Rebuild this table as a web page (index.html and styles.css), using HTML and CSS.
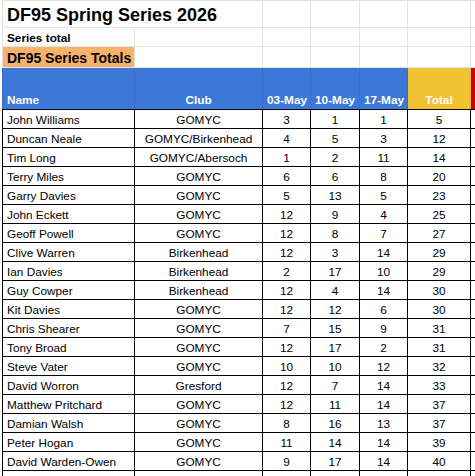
FILE: index.html
```html
<!DOCTYPE html>
<html lang="en">
<head>
    <meta charset="UTF-8">
    <meta name="viewport" content="width=device-width, initial-scale=1.0">
    <title>DF95 Spring Series 2026</title>
    <link rel="stylesheet" href="styles.css">
</head>
<body>
    <table class="sheet">
        <colgroup>
            <col class="col-name">
            <col class="col-club">
            <col class="col-race">
            <col class="col-race wide">
            <col class="col-race">
            <col class="col-total">
            <col class="col-extra">
        </colgroup>
        <tr class="title-row">
            <td colspan="2" class="title">DF95 Spring Series 2026</td>
            <td></td><td></td><td></td><td></td><td class="extra"></td>
        </tr>
        <tr class="sub-row">
            <td class="subtitle">Series total</td>
            <td></td><td></td><td></td><td></td><td></td><td class="extra"></td>
        </tr>
        <tr class="band-row">
            <td class="band">DF95 Series Totals</td>
            <td></td><td></td><td></td><td></td><td></td><td class="extra"></td>
        </tr>
        <tr class="head-row">
            <th class="name">Name</th>
            <th>Club</th>
            <th>03-May</th>
            <th>10-May</th>
            <th>17-May</th>
            <th class="total">Total</th>
            <th class="extra flag"></th>
        </tr>
        <tbody id="results"></tbody>
    </table>

    <script>
        const results = [
            ['John Williams', 'GOMYC', 3, 1, 1, 5],
            ['Duncan Neale', 'GOMYC/Birkenhead', 4, 5, 3, 12],
            ['Tim Long', 'GOMYC/Abersoch', 1, 2, 11, 14],
            ['Terry Miles', 'GOMYC', 6, 6, 8, 20],
            ['Garry Davies', 'GOMYC', 5, 13, 5, 23],
            ['John Eckett', 'GOMYC', 12, 9, 4, 25],
            ['Geoff Powell', 'GOMYC', 12, 8, 7, 27],
            ['Clive Warren', 'Birkenhead', 12, 3, 14, 29],
            ['Ian Davies', 'Birkenhead', 2, 17, 10, 29],
            ['Guy Cowper', 'Birkenhead', 12, 4, 14, 30],
            ['Kit Davies', 'GOMYC', 12, 12, 6, 30],
            ['Chris Shearer', 'GOMYC', 7, 15, 9, 31],
            ['Tony Broad', 'GOMYC', 12, 17, 2, 31],
            ['Steve Vater', 'GOMYC', 10, 10, 12, 32],
            ['David Worron', 'Gresford', 12, 7, 14, 33],
            ['Matthew Pritchard', 'GOMYC', 12, 11, 14, 37],
            ['Damian Walsh', 'GOMYC', 8, 16, 13, 37],
            ['Peter Hogan', 'GOMYC', 11, 14, 14, 39],
            ['David Warden-Owen', 'GOMYC', 9, 17, 14, 40],
            ['', '', '', '', '', '']
        ];

        const tbody = document.getElementById('results');
        results.forEach(row => {
            const tr = document.createElement('tr');
            tr.className = 'data-row';
            row.forEach((value, i) => {
                const td = document.createElement('td');
                td.textContent = value;
                if (i === 0) td.className = 'name';
                tr.appendChild(td);
            });
            const extra = document.createElement('td');
            extra.className = 'extra';
            tr.appendChild(extra);
            tbody.appendChild(tr);
        });
    </script>
</body>
</html>
```

FILE: styles.css
```css
body {
    margin: 0;
    padding: 0;
    background-color: white;
    overflow: hidden;
    font-family: "Liberation Sans", Arial, sans-serif;
    color: black;
}
.sheet {
    border-collapse: collapse;
    table-layout: fixed;
    width: 473px;
    margin-left: 2px;
}
.col-name { width: 132px; }
.col-club { width: 128px; }
.col-race { width: 48px; }
.col-race.wide { width: 49px; }
.col-total { width: 63px; }
.col-extra { width: 5px; }

.sheet td, .sheet th {
    border: 1px solid #e2e2e2;
    padding: 0 4px 1px;
    font-size: 11.8px;
    line-height: 14px;
    text-align: center;
    vertical-align: bottom;
    white-space: nowrap;
    overflow: visible;
}
.sheet .name, .sheet .title, .sheet .subtitle, .sheet .band {
    text-align: left;
}
.sheet .extra {
    padding: 0;
}

.title-row { height: 27px; }
.sheet .title {
    font-size: 18px;
    font-weight: bold;
    line-height: 20px;
    padding-bottom: 2px;
}
.sub-row { height: 19px; }
.sheet .subtitle {
    font-weight: bold;
}
.band-row { height: 21px; }
.sheet .band {
    background-color: #f6b26b;
    font-size: 14px;
    font-weight: bold;
    line-height: 16px;
}

.head-row { height: 42px; }
.head-row th {
    background-color: #3c78d8;
    color: white;
    font-weight: bold;
    border-color: #3a6fc4;
    border-bottom-color: black;
    padding-bottom: 2px;
}
.head-row .total {
    background-color: #f1c232;
    border-color: #e0b42e;
    border-bottom-color: black;
}
.head-row .flag {
    background-color: #cc0000;
    border-color: #cc0000;
    border-bottom-color: black;
}

.data-row { height: 19px; }
.data-row td {
    border-color: black;
}
```
